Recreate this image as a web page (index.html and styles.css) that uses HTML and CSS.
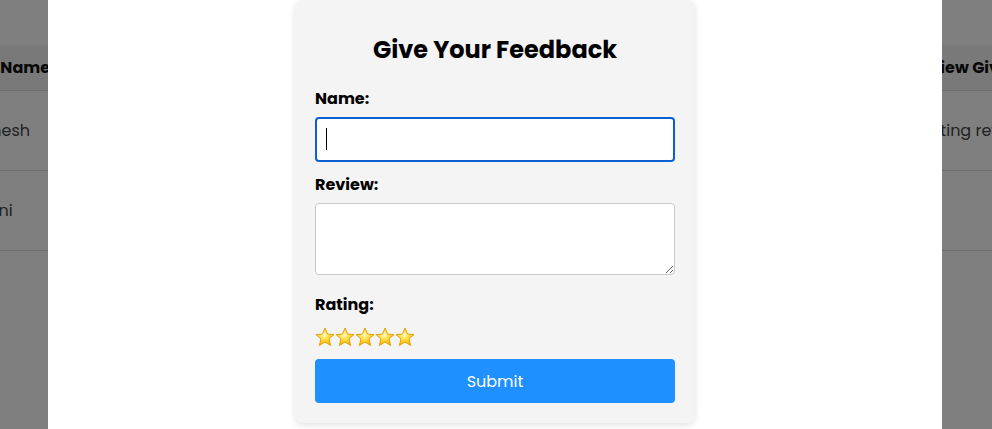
FILE: index.html
```html
<!DOCTYPE html>
<html lang="en">
<head>
<meta charset="utf-8">
<title>Give Your Feedback</title>
<link rel="stylesheet" href="styles.css">
</head>
<body>
<div class="page">
  <table class="reviews">
    <colgroup>
      <col class="col-name">
      <col class="col-mid">
      <col class="col-review">
    </colgroup>
    <thead>
      <tr><th>Full Name</th><th>Product</th><th>Review Given</th></tr>
    </thead>
    <tbody>
      <tr><td>Ganesh</td><td>Laptop</td><td>Waiting review</td></tr>
      <tr><td>Shani</td><td>Phone</td><td></td></tr>
    </tbody>
  </table>
</div>

<div class="backdrop">
  <div class="modal">
    <div class="card">
      <h2 class="title">Give Your Feedback</h2>
      <form class="form">
        <label class="label" for="name">Name:</label>
        <div class="field">
          <input class="input input-focus" id="name" type="text">
          <span class="caret"></span>
        </div>
        <label class="label" for="review">Review:</label>
        <textarea class="textarea" id="review"></textarea>
        <label class="label label-rating">Rating:</label>
        <div class="stars">
          <svg class="star" viewBox="0 0 20 20" width="20" height="20">
            <defs>
              <radialGradient id="starFill" cx="45%" cy="40%" r="60%">
                <stop offset="0" stop-color="#fffbd0"/>
                <stop offset="0.35" stop-color="#ffe45a"/>
                <stop offset="0.8" stop-color="#ffc20e"/>
                <stop offset="1" stop-color="#f5a800"/>
              </radialGradient>
            </defs>
            <polygon points="10,1 12.6,7.1 19.03,7.56 14.1,11.8 15.58,18.5 10,15 4.42,18.5 5.9,11.8 0.97,7.56 7.4,7.1" fill="url(#starFill)" stroke="#e29a00" stroke-width="0.9" stroke-linejoin="round"/>
          </svg>
          <svg class="star" viewBox="0 0 20 20" width="20" height="20"><polygon points="10,1 12.6,7.1 19.03,7.56 14.1,11.8 15.58,18.5 10,15 4.42,18.5 5.9,11.8 0.97,7.56 7.4,7.1" fill="url(#starFill)" stroke="#e29a00" stroke-width="0.9" stroke-linejoin="round"/></svg>
          <svg class="star" viewBox="0 0 20 20" width="20" height="20"><polygon points="10,1 12.6,7.1 19.03,7.56 14.1,11.8 15.58,18.5 10,15 4.42,18.5 5.9,11.8 0.97,7.56 7.4,7.1" fill="url(#starFill)" stroke="#e29a00" stroke-width="0.9" stroke-linejoin="round"/></svg>
          <svg class="star" viewBox="0 0 20 20" width="20" height="20"><polygon points="10,1 12.6,7.1 19.03,7.56 14.1,11.8 15.58,18.5 10,15 4.42,18.5 5.9,11.8 0.97,7.56 7.4,7.1" fill="url(#starFill)" stroke="#e29a00" stroke-width="0.9" stroke-linejoin="round"/></svg>
          <svg class="star" viewBox="0 0 20 20" width="20" height="20"><polygon points="10,1 12.6,7.1 19.03,7.56 14.1,11.8 15.58,18.5 10,15 4.42,18.5 5.9,11.8 0.97,7.56 7.4,7.1" fill="url(#starFill)" stroke="#e29a00" stroke-width="0.9" stroke-linejoin="round"/></svg>
        </div>
        <button class="submit" type="button">Submit</button>
      </form>
    </div>
  </div>
</div>
</body>
</html>
```
FILE: styles.css
```css
* { box-sizing: border-box; }

html, body {
  margin: 0;
  height: 100%;
  overflow: hidden;
}

body {
  font-family: "Poppins", "Inter", "Liberation Sans", sans-serif;
  color: #333;
  background: #fff;
}

.page {
  padding-top: 45px;
}

.reviews {
  border-collapse: collapse;
  table-layout: fixed;
  width: 1246px;
  margin-left: -44px;
  font-size: 16px;
}

.col-name { width: 500px; }
.col-mid { width: 442px; }
.col-review { width: 304px; }

.reviews th {
  background: #f2f2f2;
  color: #111;
  font-weight: 700;
  text-align: left;
  height: 45px;
  padding: 0 12px;
  border-bottom: 1px solid #ddd;
}

.reviews td {
  height: 80px;
  padding: 0 12px;
  border-bottom: 1px solid #ddd;
  color: #444;
}

.backdrop {
  position: fixed;
  inset: 0;
  background: rgba(0, 0, 0, 0.5);
  display: flex;
  padding: 0 50px 0 48px;
}

.modal {
  flex: 1;
  background: #fff;
  display: flex;
  justify-content: center;
  align-items: flex-start;
}

.card {
  width: 400px;
  background: #f4f4f4;
  border-radius: 8px;
  padding: 20px;
  box-shadow: 0 2px 6px rgba(0, 0, 0, 0.12);
}

.title {
  margin: 12px 0 19px;
  font-size: 24px;
  line-height: 36px;
  font-weight: 700;
  text-align: center;
  color: #000;
}

.form {
  display: flex;
  flex-direction: column;
}

.label {
  display: block;
  font-size: 16px;
  line-height: 24px;
  font-weight: 700;
  color: #000;
  margin-bottom: 6px;
}

.label-rating {
  margin-bottom: 7px;
}

.field {
  position: relative;
  margin-bottom: 11px;
}

.input {
  display: block;
  width: 100%;
  height: 45px;
  padding: 0 10px;
  font: inherit;
  font-size: 16px;
  border: 1px solid #ccc;
  border-radius: 4px;
  background: #fff;
  outline: none;
}

.input-focus {
  border: 2px solid #0b60d2;
}

.caret {
  position: absolute;
  left: 11px;
  top: 11px;
  width: 1px;
  height: 22px;
  background: #000;
}

.textarea {
  display: block;
  width: 100%;
  height: 72px;
  padding: 10px;
  font: inherit;
  font-size: 16px;
  border: 1px solid #c9c9c9;
  border-radius: 4px;
  background: #fff;
  margin-bottom: 18px;
  resize: vertical;
}

.stars {
  display: flex;
  height: 26px;
  align-items: center;
  margin-bottom: 9px;
}

.star {
  display: block;
  width: 20px;
  height: 20px;
}

.submit {
  display: block;
  width: 100%;
  height: 44px;
  border: none;
  border-radius: 4px;
  background: #1e90ff;
  color: #fff;
  font: inherit;
  font-size: 16px;
  cursor: pointer;
}
```
